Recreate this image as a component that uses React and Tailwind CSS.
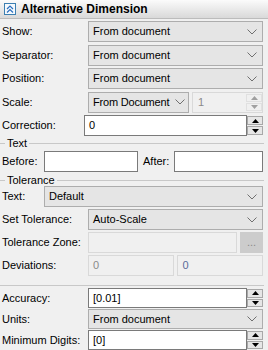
import React from "react";

const Chevron = () => (
  <svg width="10" height="6" viewBox="0 0 10 6" className="shrink-0">
    <polyline points="0.5,0.5 5,5 9.5,0.5" fill="none" stroke="#707070" strokeWidth="1" />
  </svg>
);

const Select = ({ value, className = "", h = "h-[21px]" }) => (
  <div className={`flex ${h} items-center justify-between border border-[#adadad] bg-[#e5e5e5] pl-[4px] ${className}`}>
    <span className="whitespace-nowrap">{value}</span>
    <Chevron />
  </div>
);

const Spin = ({ disabled }) => {
  const c = disabled ? "#a0a0a0" : "#000";
  const box = disabled ? "border-[#e0e0e0] bg-[#f0f0f0]" : "border-[#a8a8a8] bg-[#e6e6e6]";
  return (
    <div className="flex w-[16px] shrink-0 flex-col gap-[1px] self-stretch py-[1px]">
      <div className={`flex flex-1 items-center justify-center border ${box}`}>
        <svg width="7" height="4" viewBox="0 0 7 4"><polygon points="0,4 7,4 3.5,0" fill={c} /></svg>
      </div>
      <div className={`flex flex-1 items-center justify-center border ${box}`}>
        <svg width="7" height="4" viewBox="0 0 7 4"><polygon points="0,0 7,0 3.5,4" fill={c} /></svg>
      </div>
    </div>
  );
};

const SpinInput = ({ value, className = "", h = "h-[21px]" }) => (
  <div className={`flex ${h} items-stretch ${className}`}>
    <div className="flex flex-1 items-center border border-[#7a7a7a] bg-white pl-[4px]">{value}</div>
    <Spin />
  </div>
);

const Row = ({ label, w = "w-[88px]", h = "h-[21px]", children }) => (
  <div className={`flex ${h} items-center pr-[5px]`}>
    <div className={`${w} shrink-0 pl-[2px]`}>{label}</div>
    {children}
  </div>
);

const Group = ({ title }) => (
  <div className="flex h-[12px] items-center pr-[4px]">
    <div className="h-px w-[5px] bg-[#c8c8c8]" />
    <span className="px-[2px] leading-[12px]">{title}</span>
    <div className="h-px flex-1 bg-[#c8c8c8]" />
  </div>
);

export default function App() {
  return (
    <div className="h-[350px] w-[268px] overflow-hidden bg-[#f0f0f0] text-[11px] text-black" style={{ fontFamily: '"Liberation Sans", Arial, sans-serif' }}>
      <div className="flex h-[19px] items-center gap-[5px] border-b border-[#bcbcbc] bg-gradient-to-b from-[#fbfbfb] to-[#d9d9d9] pl-[4px]">
        <div className="flex h-[12px] w-[12px] items-center justify-center border border-[#3c7fb1] bg-[#f4f9fd]">
          <svg width="8" height="8" viewBox="0 0 8 8">
            <polyline points="1,4 4,1 7,4" fill="none" stroke="#2a6fbf" strokeWidth="1.2" />
            <polyline points="1,7.5 4,4.5 7,7.5" fill="none" stroke="#2a6fbf" strokeWidth="1.2" />
          </svg>
        </div>
        <span className="text-[12px] font-bold">Alternative Dimension</span>
      </div>

      <div className="flex flex-col gap-[2.5px] pt-[2px]">
        <Row label="Show:"><Select className="flex-1 pr-[5px]" value="From document" /></Row>
        <Row label="Separator:"><Select className="flex-1 pr-[5px]" value="From document" /></Row>
        <Row label="Position:"><Select className="flex-1 pr-[5px]" value="From document" /></Row>
        <Row label="Scale:">
          <Select className="w-[101px] pr-[3px] tracking-[-0.2px]" value="From Document" />
          <div className="ml-[3px] flex h-[21px] flex-1 items-stretch border border-[#d9d9d9] bg-[#f0f0f0]">
            <div className="flex flex-1 items-center pl-[5px] text-[#8a8a8a]">1</div>
            <Spin disabled />
          </div>
        </Row>
        <Row label="Correction:" w="w-[84px]"><SpinInput className="flex-1" value="0" /></Row>
      </div>

      <div className="mt-[1px]"><Group title="Text" /></div>
      <div className="mt-[2px] flex h-[21px] items-center pr-[5px]">
        <div className="w-[44px] shrink-0 pl-[2px]">Before:</div>
        <div className="h-[21px] w-[94px] border border-[#7a7a7a] bg-white" />
        <div className="w-[36px] shrink-0 pl-[5px]">After:</div>
        <div className="h-[21px] flex-1 border border-[#7a7a7a] bg-white" />
      </div>

      <div className="mt-[2px]"><Group title="Tolerance" /></div>
      <div className="flex flex-col gap-[2px]">
        <Row label="Text:" w="w-[44px]"><Select className="flex-1 pr-[5px]" value="Default" /></Row>
        <Row label="Set Tolerance:"><Select className="flex-1 pr-[5px]" value="Auto-Scale" /></Row>
        <Row label="Tolerance Zone:">
          <div className="h-[21px] flex-1 border border-[#d9d9d9] bg-[#f0f0f0]" />
          <div className="ml-[3px] flex h-[21px] w-[23px] items-center justify-center border border-[#cccccc] bg-[#cccccc] text-[#8a8a8a]">...</div>
        </Row>
        <Row label="Deviations:">
          <div className="flex h-[21px] flex-1 items-center border border-[#d9d9d9] bg-[#f0f0f0] pl-[4px] text-[#8a8a8a]">0</div>
          <div className="ml-[3px] flex h-[21px] flex-1 items-center border border-[#d9d9d9] bg-[#f0f0f0] pl-[5px] text-[#5a6c9a]">0</div>
        </Row>
      </div>

      <div className="mt-[9px] mr-[4px] h-px bg-[#c8c8c8]" />

      <div className="mt-[2px] flex flex-col gap-[1px]">
        <Row label="Accuracy:" h="h-[20px]"><SpinInput className="flex-1" h="h-[20px]" value="[0.01]" /></Row>
        <Row label="Units:" h="h-[20px]"><Select className="flex-1 pr-[5px]" h="h-[20px]" value="From document" /></Row>
        <Row label="Minimum Digits:" h="h-[20px]"><SpinInput className="flex-1" h="h-[20px]" value="[0]" /></Row>
      </div>
    </div>
  );
}
